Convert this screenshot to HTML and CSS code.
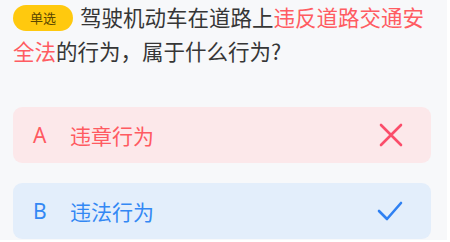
FILE: index.html
```html
<!DOCTYPE html>
<html lang="zh-CN">
<head>
  <meta charset="UTF-8" />
  <meta name="viewport" content="width=device-width, initial-scale=1.0"/>
  <title>单选</title>
  <link rel="stylesheet" href="styles.css">
</head>
<body>
  <div class="page">
    <p class="question">
      <span class="badge">单选</span>驾驶机动车在道路上<span class="hl">违反道路交通安全法</span>的行为，属于什么行为?
    </p>

    <div class="option wrong">
      <span class="letter">A</span>
      <span class="label">违章行为</span>
      <svg class="icon" viewBox="0 0 24 24" width="24" height="24">
        <path d="M2 2 L22 22 M22 2 L2 22" stroke="#fb4d6a" stroke-width="2.6" stroke-linecap="round" fill="none"/>
      </svg>
    </div>

    <div class="option right">
      <span class="letter">B</span>
      <span class="label">违法行为</span>
      <svg class="icon" viewBox="0 0 26 22" width="26" height="22">
        <path d="M2 11 L10 19 L24 3" stroke="#2f80f2" stroke-width="2.6" stroke-linecap="round" stroke-linejoin="round" fill="none"/>
      </svg>
    </div>
  </div>
</body>
</html>
```

FILE: styles.css
```css
* {
  box-sizing: border-box;
}

html, body {
  margin: 0;
  padding: 0;
  background: #fff;
  font-family: "Noto Sans CJK SC", "Noto Sans", sans-serif;
}

.page {
  width: 447px;
  height: 240px;
  background: #f7f8fa;
  padding: 0 13px;
  overflow: hidden;
}

.question {
  margin: 0 0 39px;
  font-size: 21.5px;
  line-height: 34px;
  color: #363636;
}

.question .hl {
  color: #ff5c62;
}

.badge {
  display: inline-block;
  width: 60px;
  height: 26px;
  line-height: 26px;
  margin-right: 7px;
  border-radius: 13px;
  background: #ffc90e;
  color: #5b4600;
  font-size: 13px;
  text-align: center;
  vertical-align: 3px;
}

.option {
  display: flex;
  align-items: center;
  height: 56px;
  padding: 0 28px 0 20px;
  margin: 0 3px 20px 0;
  border-radius: 9px;
  font-size: 21px;
}

.option .letter {
  width: 37px;
  font-family: "Noto Sans", sans-serif;
}

.option .label {
  flex: 1;
}

.option.wrong {
  background: #fce8ea;
  color: #ff5a61;
}

.option.right {
  background: #e3eefb;
  color: #3388f4;
}
```
